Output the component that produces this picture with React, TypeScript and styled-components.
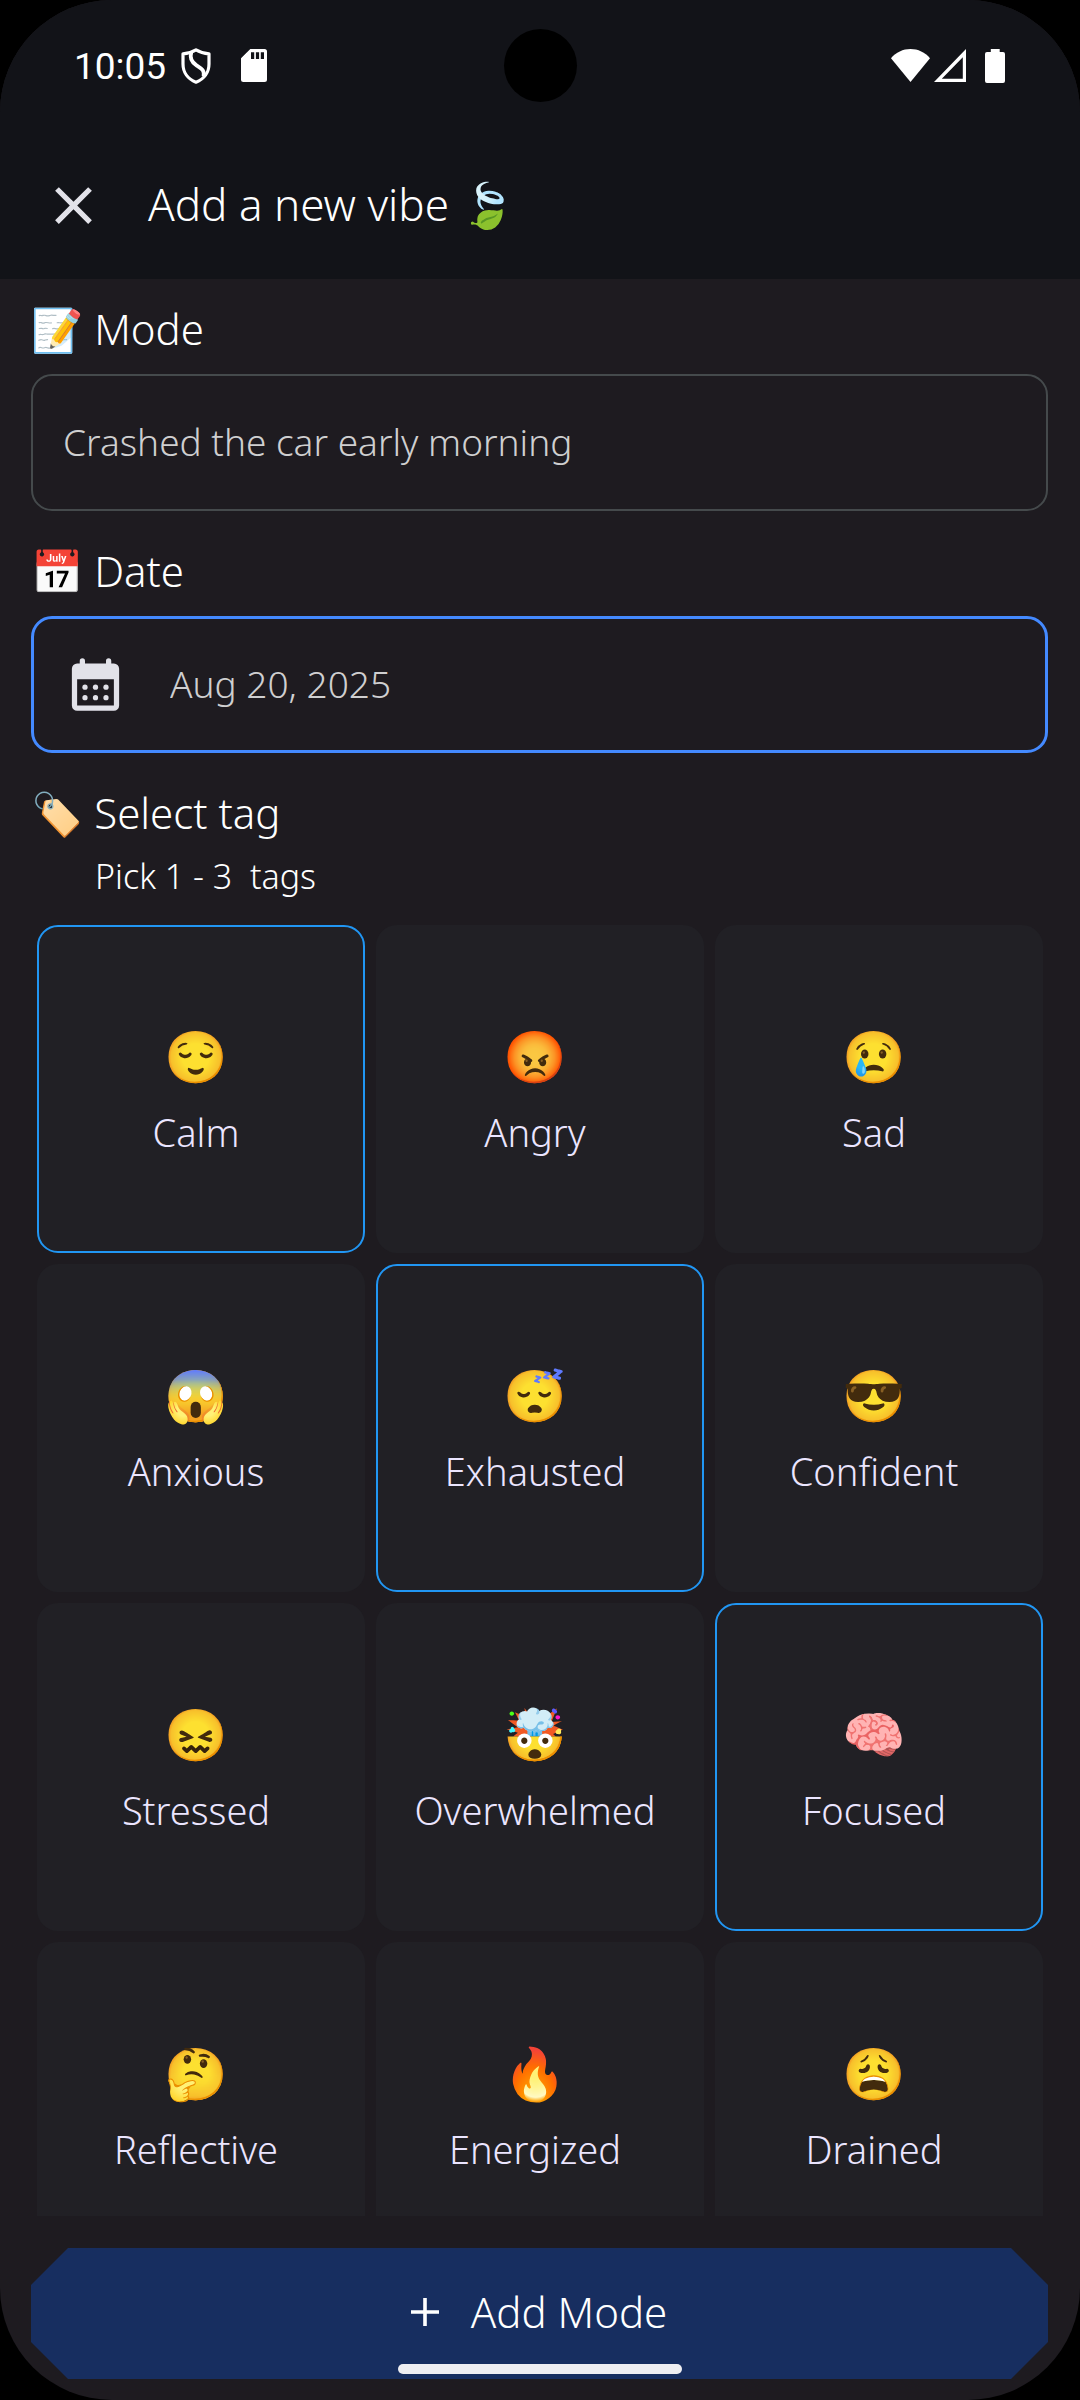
import React, { useState } from 'react';
import styled, { createGlobalStyle } from 'styled-components';

const color = {
  header: '#121318',
  surface: '#1e1b20',
  card: '#212025',
  outline: '#454a4c',
  focus: '#448aff',
  selected: '#2196f3',
  action: '#172e60',
  text: '#ffffff',
  field: '#cfcfd0',
  tag: '#ebe5ff',
  icon: '#e2e2e9',
};

const GlobalStyle = createGlobalStyle`
  *, *::before, *::after { box-sizing: border-box; }
  body {
    margin: 0;
    background: #000;
    font-family: "Noto Sans", "Noto Color Emoji", sans-serif;
    font-weight: 300;
    color: ${color.text};
  }
  button, input { font: inherit; color: inherit; border: 0; background: none; padding: 0; margin: 0; }
  button { cursor: pointer; }
  svg { display: block; flex: none; }
`;

const Screen = styled.div`
  position: relative;
  display: flex;
  flex-direction: column;
  height: 100vh;
  overflow: hidden;
  border-radius: 112px;
  background: ${color.surface};
`;

const Header = styled.header`
  background: ${color.header};
`;

const StatusBar = styled.div`
  display: flex;
  align-items: center;
  justify-content: space-between;
  height: 131px;
  padding: 0 75px 0 74px;
`;

const StatusGroup = styled.div<{ $gap: number }>`
  display: flex;
  align-items: center;
  gap: ${(p) => p.$gap}px;
`;

const Clock = styled.time`
  font-family: Roboto, sans-serif;
  font-size: 37px;
  font-weight: 400;
  line-height: 48px;
  padding-top: 2px;
  margin-right: 15px;
`;

const Signals = styled.div`
  display: flex;
  gap: 4px;
`;

const Camera = styled.div`
  position: absolute;
  top: 29px;
  left: 50%;
  width: 73px;
  height: 73px;
  margin-left: -36px;
  border-radius: 50%;
  background: #000;
`;

const AppBar = styled.div`
  display: flex;
  align-items: center;
  gap: 43px;
  height: 148px;
  padding: 0 42px;
`;

const Title = styled.h1`
  margin: 0;
  padding-bottom: 2px;
  font-size: 44px;
  font-weight: 300;
  line-height: 58px;
`;

const Form = styled.form`
  display: flex;
  flex: 1;
  flex-direction: column;
  min-height: 0;
`;

const Content = styled.div`
  display: flex;
  flex: 1;
  flex-direction: column;
  gap: 31px;
  min-height: 0;
  padding: 21px 32px 0 31px;
`;

const FieldGroup = styled.div`
  display: flex;
  flex-direction: column;
  gap: 16px;
`;

const Label = styled.label`
  font-size: 42px;
  line-height: 58px;
`;

const Field = styled.div<{ $focused?: boolean }>`
  display: flex;
  align-items: center;
  gap: 43px;
  height: 137px;
  padding: 0 30px;
  border: ${(p) => (p.$focused ? `3px solid ${color.focus}` : `2px solid ${color.outline}`)};
  border-radius: 21px;
`;

const TextInput = styled.input`
  flex: 1;
  min-width: 0;
  height: 100%;
  padding-bottom: 2px;
  outline: none;
  color: ${color.field};
  font-size: 37px;
`;

const TagSection = styled.section`
  display: flex;
  flex: 1;
  flex-direction: column;
  min-height: 0;
`;

const TagHeading = styled.h2`
  margin: 0 0 12px;
  font-size: 42px;
  font-weight: 300;
  line-height: 58px;
`;

const Hint = styled.p`
  margin: 0 0 27px;
  padding-left: 64px;
  font-size: 34px;
  line-height: 44px;
  white-space: pre;
`;

const TagScroller = styled.div`
  flex: 1;
  min-height: 0;
  overflow: hidden;
  padding: 0 5px 0 6px;
`;

const TagGrid = styled.div`
  display: grid;
  grid-template-columns: repeat(3, 1fr);
  gap: 11px;
`;

const TagCard = styled.button<{ $selected: boolean }>`
  display: flex;
  flex-direction: column;
  align-items: center;
  justify-content: center;
  gap: 17px;
  min-width: 0;
  aspect-ratio: 1;
  padding: 0 10px 4px 0;
  border: 2px solid ${(p) => (p.$selected ? color.selected : 'transparent')};
  border-radius: 21px;
  background: ${color.card};
  color: ${color.tag};
`;

const TagEmoji = styled.span`
  font-size: 51px;
  line-height: 72px;
`;

const TagName = styled.span`
  font-size: 38px;
  line-height: 48px;
`;

const Footer = styled.footer`
  padding: 32px 32px 21px 31px;
`;

const SubmitButton = styled.button`
  display: flex;
  align-items: center;
  justify-content: center;
  gap: 22px;
  width: 100%;
  height: 131px;
  padding: 0 11px 3px 0;
  background: ${color.action};
  clip-path: polygon(
    37px 0, calc(100% - 37px) 0, 100% 37px, 100% calc(100% - 37px),
    calc(100% - 37px) 100%, 37px 100%, 0 calc(100% - 37px), 0 37px
  );
  font-size: 42px;
  line-height: 58px;
`;

const HomeIndicator = styled.div`
  position: absolute;
  bottom: 26px;
  left: 50%;
  width: 284px;
  height: 10px;
  margin-left: -142px;
  border-radius: 5px;
  background: #eeeef2;
`;

const ShieldIcon = () => (
  <svg width="30" height="36" viewBox="0 0 30 36" fill="none" stroke="#fff" strokeWidth="3.200" strokeLinejoin="round">
    <path d="M15 1.800C18.500 4 23 5.400 28 5.800V16C28 24.500 23 31.200 15 34.200 7 31.200 2 24.500 2 16V5.800C7 5.400 11.500 4 15 1.800Z" />
    <path d="M10.400 4C8.400 10 10.500 14 15.500 17.300 20.600 20.600 24 22.400 22.600 28.600" strokeWidth="3.800" />
  </svg>
);

const SdCardIcon = () => (
  <svg width="26" height="33" viewBox="0 0 26 33">
    <path
      fill="#fff"
      fillRule="evenodd"
      d="M9.300 0H23.500A2.500 2.500 0 0 1 26 2.500V30.500A2.500 2.500 0 0 1 23.500 33H2.500A2.500 2.500 0 0 1 0 30.500V9.200ZM10 3.300V10H13.200V3.300ZM14.900 3.300V10H18.100V3.300ZM19.800 3.300V10H23V3.300Z"
    />
  </svg>
);

const WifiIcon = () => (
  <svg width="39" height="33" viewBox="0 0 39 33">
    <path fill="#fff" d="M0 9.200C5 3.300 12 0 19.500 0S34 3.300 39 9.200L19.500 33Z" />
  </svg>
);

const CellIcon = () => (
  <svg width="32" height="33" viewBox="0 0 32 33">
    <path fill="#fff" fillRule="evenodd" d="M32 0V33H0ZM28.800 8.200 7.800 29.700H28.800Z" />
  </svg>
);

const BatteryIcon = () => (
  <svg width="20" height="34" viewBox="0 0 20 34">
    <path fill="#fff" d="M5.800 0H14.700V3H18A2 2 0 0 1 20 5V32A2 2 0 0 1 18 34H2A2 2 0 0 1 0 32V5A2 2 0 0 1 2 3H5.800Z" />
  </svg>
);

const CloseIcon = () => (
  <svg width="63" height="63" viewBox="0 0 24 24" fill={color.icon}>
    <path d="M19 6.410 17.590 5 12 10.590 6.410 5 5 6.410 10.590 12 5 17.590 6.410 19 12 13.410 17.590 19 19 17.590 13.410 12Z" />
  </svg>
);

const CalendarIcon = () => (
  <svg width="63" height="63" viewBox="0 0 24 24" fill={color.icon}>
    <path
      fillRule="evenodd"
      d="M7 2a1 1 0 0 1 1 1v1h8V3a1 1 0 0 1 2 0v1h1a2 2 0 0 1 2 2v14a2 2 0 0 1-2 2H5a2 2 0 0 1-2-2V6a2 2 0 0 1 2-2h1V3a1 1 0 0 1 1-1ZM5 10v10h14V10Z"
    />
    {[13, 17].map((y) => [8, 12, 16].map((x) => <circle key={`${x}-${y}`} cx={x} cy={y} r="1" />))}
  </svg>
);

const PlusIcon = () => (
  <svg width="48" height="48" viewBox="0 0 24 24" fill="#fff">
    <path d="M19 12.900h-6.100V19h-1.800v-6.100H5v-1.800h6.100V5h1.800v6.100H19z" />
  </svg>
);

const IconButton = styled.button`
  display: flex;
`;

const tags = [
  { emoji: '😌', name: 'Calm' },
  { emoji: '😡', name: 'Angry' },
  { emoji: '😢', name: 'Sad' },
  { emoji: '😱', name: 'Anxious' },
  { emoji: '😴', name: 'Exhausted' },
  { emoji: '😎', name: 'Confident' },
  { emoji: '😖', name: 'Stressed' },
  { emoji: '🤯', name: 'Overwhelmed' },
  { emoji: '🧠', name: 'Focused' },
  { emoji: '🤔', name: 'Reflective' },
  { emoji: '🔥', name: 'Energized' },
  { emoji: '😩', name: 'Drained' },
];

const MAX_TAGS = 3;

export default function App() {
  const [mode, setMode] = useState('Crashed the car early morning');
  const [selected, setSelected] = useState(['Calm', 'Exhausted', 'Focused']);

  const toggle = (name: string) =>
    setSelected((current) => {
      if (current.includes(name)) return current.filter((item) => item !== name);
      return current.length < MAX_TAGS ? [...current, name] : current;
    });

  return (
    <>
      <GlobalStyle />
      <Screen>
        <Header>
          <StatusBar>
            <StatusGroup $gap={30}>
              <StatusGroup $gap={0}>
                <Clock>10:05</Clock>
                <ShieldIcon />
              </StatusGroup>
              <SdCardIcon />
            </StatusGroup>
            <StatusGroup $gap={19}>
              <Signals>
                <WifiIcon />
                <CellIcon />
              </Signals>
              <BatteryIcon />
            </StatusGroup>
          </StatusBar>
          <Camera />
          <AppBar>
            <IconButton type="button" aria-label="Close">
              <CloseIcon />
            </IconButton>
            <Title>Add a new vibe 🍃</Title>
          </AppBar>
        </Header>

        <Form onSubmit={(event) => event.preventDefault()}>
          <Content>
            <FieldGroup>
              <Label htmlFor="mode">📝 Mode</Label>
              <Field>
                <TextInput id="mode" type="text" value={mode} onChange={(event) => setMode(event.target.value)} />
              </Field>
            </FieldGroup>

            <FieldGroup>
              <Label htmlFor="date">📅 Date</Label>
              <Field $focused>
                <IconButton type="button" aria-label="Choose date">
                  <CalendarIcon />
                </IconButton>
                <TextInput id="date" type="text" value="Aug 20, 2025" readOnly />
              </Field>
            </FieldGroup>

            <TagSection>
              <TagHeading>🏷️ Select tag</TagHeading>
              <Hint>{'Pick 1 - 3  tags'}</Hint>
              <TagScroller>
                <TagGrid>
                  {tags.map(({ emoji, name }) => (
                    <TagCard
                      key={name}
                      type="button"
                      aria-pressed={selected.includes(name)}
                      $selected={selected.includes(name)}
                      onClick={() => toggle(name)}
                    >
                      <TagEmoji aria-hidden="true">{emoji}</TagEmoji>
                      <TagName>{name}</TagName>
                    </TagCard>
                  ))}
                </TagGrid>
              </TagScroller>
            </TagSection>
          </Content>

          <Footer>
            <SubmitButton type="submit">
              <PlusIcon />
              Add Mode
            </SubmitButton>
          </Footer>
        </Form>
        <HomeIndicator />
      </Screen>
    </>
  );
}
